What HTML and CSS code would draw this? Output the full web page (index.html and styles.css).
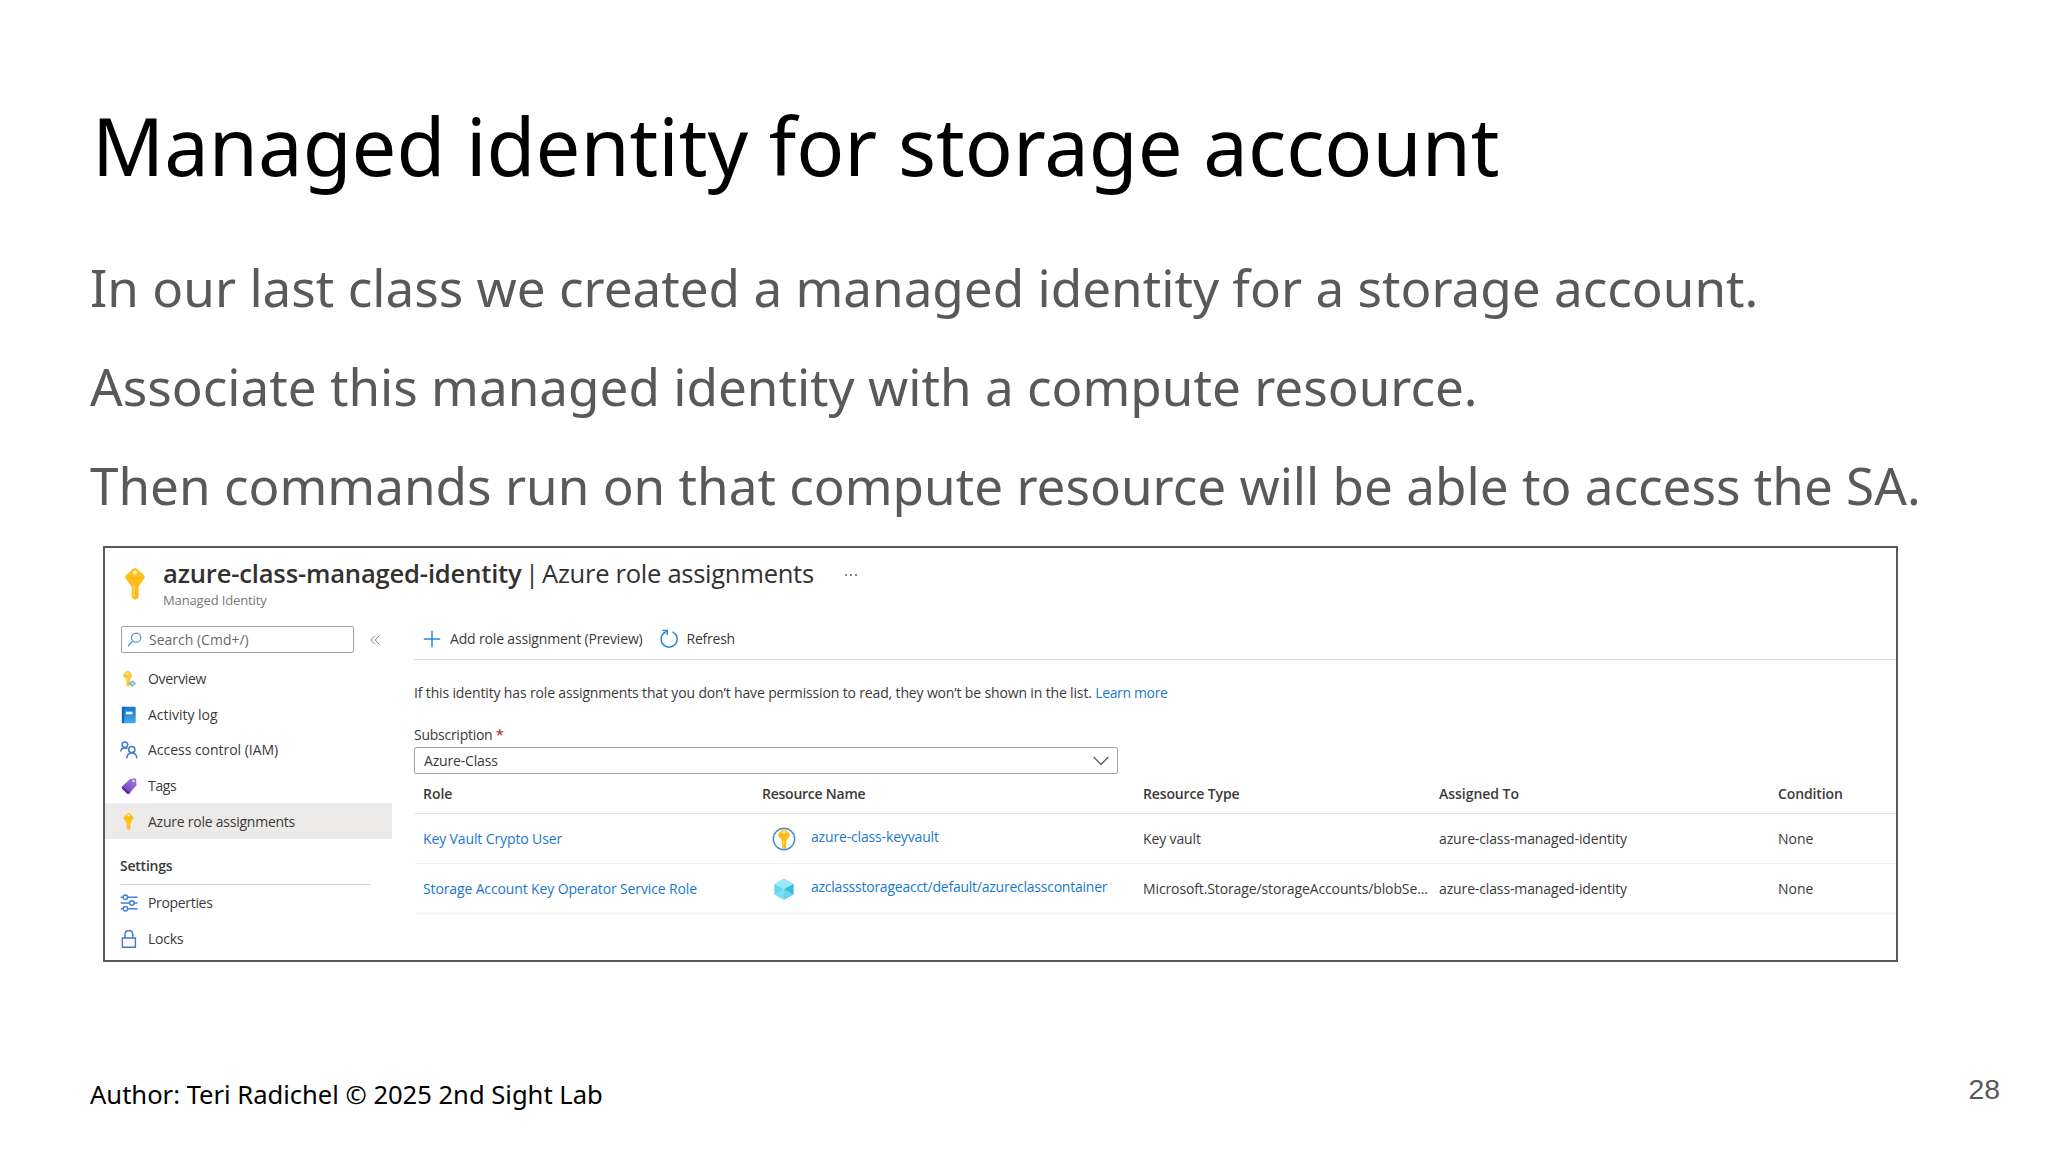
FILE: index.html
```html
<!DOCTYPE html>
<html lang="en">
<head>
<meta charset="utf-8">
<title>Managed identity for storage account</title>
<link rel="stylesheet" href="styles.css">
</head>
<body>
<svg class="defs" width="0" height="0" aria-hidden="true">
  <defs>
    <linearGradient id="gold" x1="0" y1="0" x2="0" y2="1"><stop offset="0" stop-color="#ffc31f"/><stop offset="1" stop-color="#fdb515"/></linearGradient>
    <linearGradient id="blue" x1="0" y1="0" x2="0" y2="1"><stop offset="0" stop-color="#1b74c8"/><stop offset="1" stop-color="#46acee"/></linearGradient>
    <linearGradient id="violet" x1="0" y1="1" x2="1" y2="0"><stop offset="0" stop-color="#6a35b4"/><stop offset="1" stop-color="#a67fe0"/></linearGradient>
    <symbol id="key" viewBox="0 0 20 32">
      <path fill="url(#gold)" d="M7.600.9Q10-.8 12.400.9L18.800 7Q20.400 9 19 11L14.300 17.500Q13.500 18.500 13.500 20V29.500L11 31.600H9.300L6.700 29.200V20Q6.700 18.500 5.900 17.500L1 11Q-.4 9 1.200 7Z"/>
      <circle cx="10" cy="4.800" r="2" fill="#fff6d8"/>
      <path fill="#f0a000" d="M4.500 9.700h11v1.500h-11z" opacity=".45"/>
      <path fill="#ffda55" d="M8.300 17h1.500v12h-1.500z"/>
    </symbol>
  </defs>
</svg>
<main class="slide">
  <h1 class="slide-title">Managed identity for storage account</h1>
  <div class="slide-body">
    <p>In our last class we created a managed identity for a storage account.</p>
    <p>Associate this managed identity with a compute resource.</p>
    <p>Then commands run on that compute resource will be able to access the SA.</p>
  </div>

  <section class="portal">
    <header class="portal-header">
      <svg class="header-key"><use href="#key"/></svg>
      <div class="heading">
        <h2><b>azure-class-managed-identity</b><span class="bar">|</span><span class="blade">Azure role assignments</span><span class="more"><i></i><i></i><i></i></span></h2>
        <span class="subtitle">Managed Identity</span>
      </div>
    </header>

    <div class="portal-content">
      <nav class="sidebar">
        <div class="search-row">
          <div class="search">
            <svg viewBox="0 0 16 16" width="15" height="15" fill="none" stroke="#4a92dc" stroke-width="1.300"><circle cx="9.800" cy="6" r="4.900"/><path d="M6.300 9.500 1 14.900"/></svg>
            <span>Search (Cmd+/)</span>
          </div>
          <svg class="collapse" viewBox="0 0 10 10" width="10" height="10" fill="none" stroke="#8a8886"><path d="M4.800.7.8 5l4 4.300M9.200.7 5.200 5l4 4.300"/></svg>
        </div>
        <ul class="menu">
          <li>
            <svg viewBox="0 0 18 18"><path fill="#fcca3c" d="M6.500 1Q8 .3 9.500 1.500L12 4.500Q12.500 6 11.500 7.500L10 9.500V15L8.300 16.800 6.300 15.500V9.500L3.300 6.500Q2.500 5 3.800 3.500Z"/><circle cx="7.300" cy="3.700" r="1.200" fill="#fff1b8"/><path fill="#6fb4d8" d="m12.200 10.300 4 3.300-4 3.400-4-3.400z"/><path fill="#b8e0ee" d="m12.200 12 2 1.600-2 1.700-2-1.700z"/></svg>
            <span class="tight">Overview</span></li>
          <li>
            <svg viewBox="0 0 18 18"><path fill="url(#blue)" d="M3.200.7h11.200q1.300 0 1.300 1.300v14q0 1.300-1.300 1.300H3.200Q1.900 17.300 1.900 16V2Q1.900.7 3.200.7z"/><path fill="#1664b4" d="M3.200.7h1v16.600h-1Q1.900 17.300 1.900 16V2Q1.900.7 3.200.7z"/><path fill="#e9f6ff" d="M6 5.700h6.400v2.600H6z"/></svg>
            <span class="loose">Activity log</span></li>
          <li>
            <svg viewBox="0 0 18 18" fill="none" stroke="#3f78cf" stroke-width="1.500"><circle cx="4.900" cy="3.800" r="2.800"/><path d="M.8 10.600C.8 8.300 2.600 7 4.600 7c1.200 0 2 .4 2.700 1"/><circle cx="11.800" cy="8.500" r="3.100"/><path d="M6.800 17.300c.2-3.300 2.300-5.400 5-5.400s4.900 2.100 5.100 5.400"/></svg>
            <span class="loose">Access control (IAM)</span></li>
          <li>
            <svg viewBox="0 0 18 18"><path fill="url(#violet)" d="M9.800 2.200 14.800 1.200Q16 1.200 16.200 2.400L16.500 8.300 9.300 16.500Q8 17.500 7 16.600L2 11.500Q1.400 10.400 2.200 9.600Z"/><path fill="#5d2aa3" d="m2 11.500 5 5.100q1 .9 2.300-.1l.8-.9L2.200 9.600q-.8.8-.2 1.900z"/><circle cx="13.500" cy="4" r="1.200" fill="#e7dcf8"/></svg>
            <span class="tight">Tags</span></li>
          <li class="selected">
            <svg class="small-key"><use href="#key"/></svg>
            <span class="mid">Azure role assignments</span></li>
        </ul>
        <h3>Settings</h3>
        <ul class="menu">
          <li>
            <svg viewBox="0 0 18 18" fill="none" stroke="#4380d3" stroke-width="1.500"><path d="M.7 3.200h2M8 3.200h9.500M.7 9h8.500M14.500 9h3M.7 14.700h2M8 14.700h9.500"/><circle cx="5.300" cy="3.200" r="2.300"/><circle cx="11.900" cy="9" r="2.300"/><circle cx="5.300" cy="14.700" r="2.300"/></svg>
            <span class="tight">Properties</span></li>
          <li>
            <svg viewBox="0 0 18 18" fill="none" stroke="#3f78cf" stroke-width="1.400"><path d="M2.400 8h13v9.300h-13zM5 8V4.600C5 2 6.600.5 8.900.5s3.900 1.500 3.900 4.100V8"/></svg>
            <span class="mid">Locks</span></li>
        </ul>
      </nav>

      <div class="main">
        <div class="toolbar">
          <svg viewBox="0 0 18 18" width="18" height="18" stroke="#2b88d8" stroke-width="1.500"><path d="M9 .8v16.400M.8 9h16.400"/></svg>
          <span class="add">Add role assignment (Preview)</span>
          <svg viewBox="0 0 18 20" width="18" height="20" fill="none" stroke="#2b88d8" stroke-width="1.500"><path d="M12.500 2.900A8 8 0 1 1 4.400 3.700"/><path d="M2.500 1.500H7.200V6"/><path d="M7 1.700 4 4.300"/></svg>
          <span class="mid">Refresh</span>
        </div>
        <p class="info">If this identity has role assignments that you don’t have permission to read, they won’t be shown in the list. <a>Learn more</a></p>
        <label class="field-label">Subscription <em>*</em></label>
        <div class="select"><span>Azure-Class</span>
          <svg viewBox="0 0 16 10" width="16" height="10" fill="none" stroke="#605e5c" stroke-width="1.300"><path d="m.7 1 7.300 7.500L15.300 1"/></svg>
        </div>
        <div class="grid">
          <div class="row head"><span class="loose">Role</span><span class="mid">Resource Name</span><span>Resource Type</span><span class="loose">Assigned To</span><span>Condition</span></div>
          <div class="row">
            <a class="role-short">Key Vault Crypto User</a>
            <div class="resource">
              <svg viewBox="0 0 24 24" width="24" height="24"><circle cx="12" cy="12" r="10.700" fill="#fff" stroke="#4b8fcb" stroke-width="1.500"/><use href="#key" x="5.500" y="2.200" width="13" height="19.800"/></svg>
              <a>azure-class-keyvault</a></div>
            <span>Key vault</span><span>azure-class-managed-identity</span><span class="loose">None</span>
          </div>
          <div class="row">
            <a>Storage Account Key Operator Service Role</a>
            <div class="resource">
              <svg viewBox="0 0 24 24" width="24" height="24"><path fill="#9be8f8" d="m12 1.500 9.600 5.200L12 12 2.400 6.700z"/><path fill="#62d8f0" d="M2.400 6.700 12 12v10.700L2.400 17.400z"/><path fill="#35bedb" d="M21.600 6.700 12 12v10.700l9.600-5.300z"/><path fill="#8be5f6" d="m12 12 9.600 5.400L12 22.700 2.400 17.400z" opacity=".6"/></svg>
              <a class="container-name">azclassstorageacct/default/azureclasscontainer</a></div>
            <span class="type-long">Microsoft.Storage/storageAccounts/blobSe...</span><span>azure-class-managed-identity</span><span class="loose">None</span>
          </div>
        </div>
      </div>
    </div>
  </section>

  <footer class="slide-footer">
    <span class="author">Author: Teri Radichel © 2025 2nd Sight Lab</span>
    <span class="page">28</span>
  </footer>
</main>
</body>
</html>
```
FILE: styles.css
```css
* { box-sizing: border-box; margin: 0; padding: 0; }
body { background: #fff; }
.defs { position: absolute; }
.slide {
  width: 2048px;
  height: 1152px;
  overflow: hidden;
  padding-top: 95px;
  background: #fff;
  font-family: "Noto Sans", sans-serif;
}
.slide-title {
  padding-left: 92px;
  font-size: 79.6px;
  line-height: 100px;
  font-weight: 400;
  letter-spacing: -.01px;
  color: #000;
}
.slide-body { margin-top: 43px; padding-left: 90px; }
.slide-body p {
  font-size: 51.2px;
  line-height: 99px;
  letter-spacing: .005px;
  color: #595959;
  white-space: nowrap;
}

/* Azure portal panel */
.portal {
  width: 1795px;
  height: 416px;
  margin: 11px 0 0 103px;
  border: 2px solid #595959;
  font: 14px/20px "Open Sans", "Noto Sans", sans-serif;
  letter-spacing: -.13px;
  color: #3b3a39;
  white-space: nowrap;
  overflow: hidden;
}
.portal a { color: #1a78cc; }
.portal-header { display: flex; height: 71px; padding: 20px 0 0 20px; }
.header-key { width: 20px; height: 32px; }
.heading { margin: -10px 0 0 18px; }
.heading h2 {
  display: flex;
  align-items: center;
  font-size: 25.6px;
  line-height: 32px;
  font-weight: 400;
  color: #323130;
}
.heading b { width: 362px; font-weight: 600; letter-spacing: -.19px; }
.bar { width: 17px; }
.blade { width: 303px; letter-spacing: -.3px; }
.more { display: flex; gap: 3px; padding-top: 1px; }
.more i { width: 2px; height: 2px; background: #8a8886; }
.subtitle { display: block; font-size: 13px; line-height: 20px; color: #797775; }

.portal-content { display: flex; }
.sidebar { width: 287px; }
.search-row { display: flex; align-items: center; height: 41px; padding-left: 16px; margin-bottom: 1px; }
.search {
  display: flex;
  align-items: center;
  gap: 7px;
  width: 233px;
  height: 27px;
  padding-left: 5px;
  border: 1.500px solid #a3a19f;
  border-radius: 2px;
  color: #6b6967;
  letter-spacing: 0;
}
.collapse { margin-left: 16px; }
.menu { list-style: none; }
.menu li { display: flex; align-items: center; gap: 10px; height: 35.600px; padding-left: 15px; }
.menu span { padding-top: 1px; }
.menu svg { width: 18px; height: 18px; margin-top: 1px; }
.menu .small-key { width: 11px; height: 17px; margin: 0 4px 0 3px; }
.selected { background: #edebe9; }
.tight { letter-spacing: -.33px; }
.mid { letter-spacing: -.24px; }
.loose { letter-spacing: -.03px; }
.sidebar h3 {
  width: 250px;
  height: 46px;
  margin-left: 15px;
  padding-top: 17px;
  border-bottom: 1px solid #d2d0ce;
  font-size: 14px;
  font-weight: 600;
  line-height: 20px;
  letter-spacing: -.24px;
}

.main { flex: 1; margin-left: 22px; }
.toolbar { display: flex; align-items: center; height: 41px; padding-left: 9px; border-bottom: 1px solid #dddcdb; }
.toolbar .add { margin: 0 17px 0 9px; letter-spacing: -.16px; }
.toolbar .mid { margin-left: 9px; }
.info { margin-top: 23px; letter-spacing: -.15px; }
.info a { letter-spacing: -.36px; }
.field-label { display: block; margin-top: 21px; letter-spacing: -.26px; }
.field-label em { font-style: normal; color: #b5122e; font-size: 15px; }
.select {
  display: flex;
  align-items: center;
  justify-content: space-between;
  width: 704px;
  height: 27px;
  margin-top: 2px;
  padding: 0 8px 0 9px;
  border: 1.500px solid #a3a19f;
  border-radius: 2px;
  letter-spacing: -.17px;
}
.row {
  display: grid;
  grid-template-columns: 339px 381px 296px 339px 1fr;
  align-items: center;
  height: 50px;
  padding-left: 9px;
  border-bottom: 1px solid #f3f2f1;
}
.head { height: 40px; border-bottom-color: #e6e5e4; font-weight: 600; }
.role-short { letter-spacing: -.12px; }
.resource { display: flex; align-items: center; gap: 15px; padding-left: 10px; }
.resource a { padding-bottom: 4px; letter-spacing: -.16px; }
.resource .container-name { letter-spacing: -.24px; }
.row .type-long { letter-spacing: -.12px; }

.slide-footer { display: flex; justify-content: space-between; margin-top: 109px; padding: 0 48px 0 90px; }
.author { margin-top: 6px; font-size: 25.6px; line-height: 36px; letter-spacing: -.02px; color: #000; }
.page { font: 28.4px/36px "Liberation Sans", Arial, sans-serif; color: #595959; }
```
